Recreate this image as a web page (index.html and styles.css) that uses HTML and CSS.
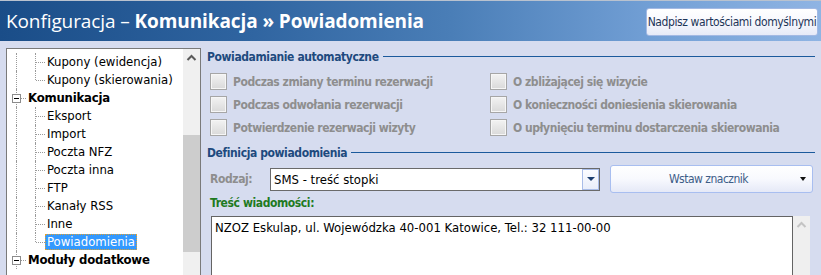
FILE: index.html
```html
<!DOCTYPE html>
<html lang="pl">
<head>
<meta charset="utf-8">
<title>Konfiguracja – Komunikacja » Powiadomienia</title>
<link rel="stylesheet" href="styles.css">
</head>
<body>
<header class="titlebar">
  <h1 class="title">Konfiguracja – <b>Komunikacja » Powiadomienia</b></h1>
  <button class="btn-defaults" type="button">Nadpisz wartościami domyślnymi</button>
</header>
<div class="main">
  <div class="tree">
    <div class="tree-body">
      <div class="row"><span class="g v"></span><span class="g v h"></span><span class="lbl">Kupony (ewidencja)</span></div>
      <div class="row"><span class="g v"></span><span class="g vh h"></span><span class="lbl">Kupony (skierowania)</span></div>
      <div class="row"><span class="g v hr"><span class="expander"></span></span><span class="lbl bold">Komunikacja</span></div>
      <div class="row"><span class="g v"></span><span class="g v h"></span><span class="lbl">Eksport</span></div>
      <div class="row"><span class="g v"></span><span class="g v h"></span><span class="lbl">Import</span></div>
      <div class="row"><span class="g v"></span><span class="g v h"></span><span class="lbl">Poczta NFZ</span></div>
      <div class="row"><span class="g v"></span><span class="g v h"></span><span class="lbl">Poczta inna</span></div>
      <div class="row"><span class="g v"></span><span class="g v h"></span><span class="lbl">FTP</span></div>
      <div class="row"><span class="g v"></span><span class="g v h"></span><span class="lbl">Kanały RSS</span></div>
      <div class="row"><span class="g v"></span><span class="g v h"></span><span class="lbl">Inne</span></div>
      <div class="row"><span class="g v"></span><span class="g vh h"></span><span class="lbl selected">Powiadomienia</span></div>
      <div class="row"><span class="g v hr"><span class="expander"></span></span><span class="lbl bold">Moduły dodatkowe</span></div>
    </div>
    <div class="vscroll">
      <svg class="chev" width="17" height="17" viewBox="0 0 17 17"><polyline points="4.5,11 8.5,7 12.5,11" fill="none" stroke="#5a5a5a" stroke-width="2"/></svg>
      <span class="track"></span>
      <span class="thumb"></span>
    </div>
  </div>

  <div class="content">
    <div class="group-title">Powiadamianie automatyczne</div>
    <div class="checks">
      <label class="check"><span class="box"></span>Podczas zmiany terminu rezerwacji</label>
      <label class="check"><span class="box"></span>O zbliżającej się wizycie</label>
      <label class="check"><span class="box"></span>Podczas odwołania rezerwacji</label>
      <label class="check"><span class="box"></span>O konieczności doniesienia skierowania</label>
      <label class="check"><span class="box"></span>Potwierdzenie rezerwacji wizyty</label>
      <label class="check"><span class="box"></span>O upłynięciu terminu dostarczenia skierowania</label>
    </div>

    <div class="group-title second">Definicja powiadomienia</div>
    <div class="kind-row">
      <span class="field-label">Rodzaj:</span>
      <div class="select">
        <span class="select-text">SMS - treść stopki</span>
        <span class="select-btn"><span class="tri"></span></span>
      </div>
      <button class="btn-insert" type="button"><span class="btn-insert-text">Wstaw znacznik</span><span class="tri black"></span></button>
    </div>
    <div class="msg-label">Treść wiadomości:</div>
    <div class="msg-row">
      <div class="msg-box">NZOZ Eskulap, ul. Wojewódzka 40-001 Katowice, Tel.: 32 111-00-00</div>
      <div class="msg-scroll">
        <svg class="chev" width="17" height="17" viewBox="0 0 17 17"><polyline points="4.5,11 8.5,7 12.5,11" fill="none" stroke="#c4c4c4" stroke-width="2"/></svg>
      </div>
    </div>
  </div>
</div>
</body>
</html>
```

FILE: styles.css
```css
html, body {
  margin: 0;
  padding: 0;
}
body {
  width: 821px;
  height: 275px;
  overflow: hidden;
  background: #d6dcef;
  font-family: "DejaVu Sans Condensed", "DejaVu Sans", sans-serif;
  font-size: 13px;
  color: #000;
}

/* Title bar */
.titlebar {
  height: 40px;
  border-top: 1px solid #b9c2cf;
  background: linear-gradient(to right, #1a4d88 0%, #2f64a0 30%, #4a7eb7 55%, #73a0d6 80%, #8fb4e3 100%);
  display: flex;
  align-items: center;
  justify-content: space-between;
  padding: 0 3px 0 6px;
}
.title {
  margin: 0;
  font-family: "Open Sans", "Noto Sans", sans-serif;
  font-size: 19px;
  font-weight: normal;
  color: #fff;
  letter-spacing: -0.1px;
  white-space: nowrap;
}
.title b {
  font-weight: bold;
}
.btn-defaults {
  width: 172px;
  height: 28px;
  margin-top: 1px;
  padding: 0;
  border: 1px solid #a3b9e3;
  border-radius: 3px;
  background: linear-gradient(#ffffff 0%, #f7f8fd 50%, #e6eaf7 100%);
  font-family: "DejaVu Sans Condensed", "DejaVu Sans", sans-serif;
  font-size: 12px;
  letter-spacing: -0.4px;
  color: #1d3558;
  white-space: nowrap;
}

/* Main area */
.main {
  display: flex;
  align-items: flex-start;
}

/* Tree */
.tree {
  flex: none;
  margin: 7px 0 0 6px;
  width: 193px;
  height: 240px;
  border: 1px solid #7a7a7a;
  background: #fff;
  display: flex;
}
.tree-body {
  flex: 1;
  padding-top: 4px;
}
.row {
  display: flex;
  height: 18px;
  align-items: stretch;
}
.g {
  position: relative;
  width: 19px;
  flex: none;
}
.v::before {
  content: "";
  position: absolute;
  left: 9px;
  top: 0;
  bottom: 0;
  border-left: 1px dotted #9a9a9a;
}
.vh::before {
  content: "";
  position: absolute;
  left: 9px;
  top: 0;
  height: 9px;
  border-left: 1px dotted #9a9a9a;
}
.h::after {
  content: "";
  position: absolute;
  left: 10px;
  right: 0;
  top: 9px;
  border-top: 1px dotted #9a9a9a;
}
.hr::after {
  content: "";
  position: absolute;
  left: 14px;
  right: 0;
  top: 9px;
  border-top: 1px dotted #9a9a9a;
}
.expander {
  position: absolute;
  left: 5px;
  top: 5px;
  width: 7px;
  height: 7px;
  border: 1px solid #8c8c8c;
  background: #fff;
  z-index: 1;
}
.expander::after {
  content: "";
  position: absolute;
  left: 1px;
  right: 1px;
  top: 3px;
  border-top: 1px solid #000;
}
.lbl {
  padding: 0 2px;
  line-height: 16px;
  margin: 1px 0;
  white-space: nowrap;
  font-size: 13px;
  box-sizing: border-box;
}
.lbl.bold {
  font-weight: bold;
  letter-spacing: -0.2px;
}
.lbl.selected {
  background: #3399ff;
  color: #fff;
  outline: 1px dotted #e0a030;
  outline-offset: -1px;
}

.vscroll {
  width: 17px;
  background: #f0f0f0;
  display: flex;
  flex-direction: column;
}
.chev {
  display: block;
  flex: none;
}
.track {
  height: 69px;
}
.thumb {
  display: block;
  height: 117px;
  background: #cdcdcd;
}

/* Content */
.content {
  flex: 1;
  min-width: 0;
  padding: 8px 6px 0 6px;
}
.group-title {
  display: flex;
  align-items: center;
  gap: 4px;
  line-height: 16px;
  font-size: 12px;
  letter-spacing: -0.4px;
  font-weight: bold;
  color: #1e4a7e;
  white-space: nowrap;
}
.group-title::after {
  content: "";
  flex: 1;
  border-top: 1px solid #1b5a9c;
  margin-top: -1px;
}
.group-title.second {
  margin-top: 9px;
}
.checks {
  display: grid;
  grid-template-columns: 280px auto;
  row-gap: 6px;
  margin: 8px 0 0 3px;
}
.check {
  display: flex;
  align-items: center;
  gap: 6px;
  height: 17px;
  font-size: 12px;
  letter-spacing: -0.45px;
  font-weight: bold;
  color: #8e8e8e;
  white-space: nowrap;
}
.box {
  width: 17px;
  height: 17px;
  box-sizing: border-box;
  border: 1px solid #a6a6a6;
  background: linear-gradient(#f3f3f3, #d9d9d9);
  box-shadow: inset 0 0 0 1px #f6f6f6;
  flex: none;
}

.kind-row {
  display: flex;
  align-items: center;
  height: 28px;
  margin-top: 4px;
  padding-left: 3px;
}
.field-label {
  width: 60px;
  font-size: 12px;
  letter-spacing: -0.4px;
  font-weight: bold;
  color: #8e8e8e;
}
.select {
  width: 330px;
  height: 23px;
  box-sizing: border-box;
  border: 1px solid #6a6a6a;
  background: #fff;
  display: flex;
  align-items: stretch;
}
.select-text {
  flex: 1;
  padding-left: 3px;
  line-height: 21px;
  font-size: 13px;
}
.select-btn {
  width: 17px;
  box-sizing: border-box;
  border: 1px solid #a9bde8;
  background: linear-gradient(#fbfcff, #e9eefa);
  display: flex;
  align-items: center;
  justify-content: center;
}
.tri {
  width: 0;
  height: 0;
  border-left: 4px solid transparent;
  border-right: 4px solid transparent;
  border-top: 4px solid #1c3f70;
}
.tri.black {
  border-top-color: #111;
  border-left-width: 3px;
  border-right-width: 3px;
}
.btn-insert {
  margin-left: 10px;
  width: 203px;
  height: 28px;
  border: 1px solid #a8bef0;
  border-radius: 3px;
  background: linear-gradient(#ffffff 0%, #f8f9fe 50%, #e5e9f7 100%);
  display: flex;
  align-items: center;
  padding: 0 6px 0 0;
  font-family: "DejaVu Sans Condensed", "DejaVu Sans", sans-serif;
}
.btn-insert-text {
  flex: 1;
  text-align: center;
  font-size: 12px;
  letter-spacing: -0.5px;
  color: #3d5d88;
  padding-left: 6px;
}
.msg-label {
  margin-top: 2px;
  padding-left: 3px;
  line-height: 16px;
  font-size: 12px;
  letter-spacing: -0.4px;
  font-weight: bold;
  color: #1f7a1f;
}
.msg-row {
  display: flex;
  margin: 5px 0 0 4px;
}
.msg-box {
  width: 582px;
  height: 80px;
  box-sizing: border-box;
  border: 1px solid #646464;
  background: #fff;
  padding: 3px 3px;
  font-size: 13px;
  line-height: 16px;
  white-space: nowrap;
}
.msg-scroll {
  width: 17px;
  height: 80px;
  background: #efefef;
}
```
